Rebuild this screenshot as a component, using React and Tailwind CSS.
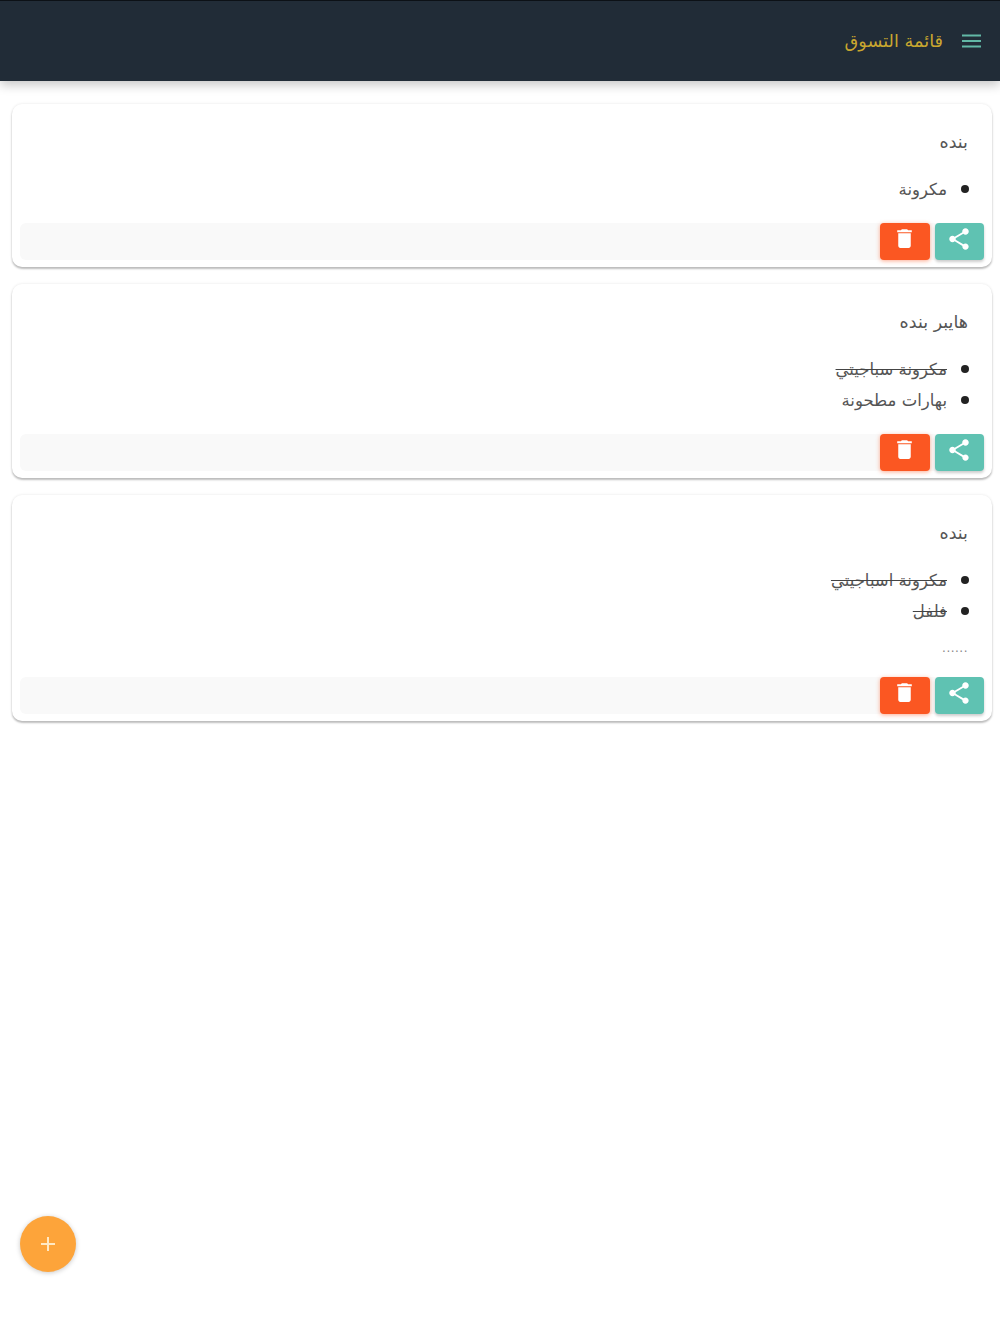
import React from 'react'
import { MdShare, MdDelete } from 'react-icons/md'

const lists = [
  { title: 'بنده', items: [{ text: 'مكرونة' }] },
  { title: 'هايبر بنده', items: [{ text: 'مكرونة سباجيتي', done: true }, { text: 'بهارات مطحونة' }] },
  { title: 'بنده', items: [{ text: 'مكرونة اسباجيتي', done: true }, { text: 'فلفل', done: true }], note: '......' },
]

function ListCard({ list }) {
  return (
    <div className="rounded-[10px] bg-white px-2 pb-[7px] shadow-[0_2px_2px_rgba(0,0,0,0.24),0_0_3px_rgba(0,0,0,0.1)]">
      <p className="pr-4 pt-[25px] text-[17.5px] leading-[26px] text-[#555]">{list.title}</p>
      <ul className="mt-[23px] pr-[37px]">
        {list.items.map((item, i) => (
          <li key={i} className="relative h-[31px] text-[16.5px] leading-[24px] text-[#555]">
            <span className="absolute -right-[22px] top-[7px] h-[8px] w-[8px] rounded-full bg-[#222]" />
            <span className={item.done ? 'line-through decoration-[#444]' : ''}>{item.text}</span>
          </li>
        ))}
      </ul>
      {list.note && <p className="pb-[6px] pr-4 pt-[8px] text-[12px] leading-[18px] tracking-[0.5px] text-[#888]">{list.note}</p>}
      <div className="mt-[14px] flex h-[37px] items-start gap-[5px] rounded-[6px] bg-[#f9f9f9]">
        <button className="flex h-[37px] w-[49px] items-start justify-center rounded-[4px] bg-[#5fc2b2] pr-[1px] pt-[3px] text-white shadow-[0_2px_3px_rgba(0,0,0,0.2)]">
          <MdShare size={26} />
        </button>
        <button className="flex h-[37px] w-[50px] items-start justify-center rounded-[4px] bg-[#fb5722] pr-[1px] pt-[3px] text-white shadow-[0_1px_4px_rgba(251,87,34,0.5)]">
          <MdDelete size={25} />
        </button>
      </div>
    </div>
  )
}

export default function App() {
  return (
    <div dir="rtl" className="relative h-[1334px] overflow-hidden bg-white font-['DejaVu_Sans','Noto_Sans',sans-serif]">
      <header className="flex h-[81px] items-center gap-[19px] border-t border-[#0c1116] bg-[#212c37] pr-[19px] shadow-[0_4px_10px_rgba(0,0,0,0.22)]">
        <svg width="19" height="14" viewBox="0 0 19 14" className="text-[#62b8a6]">
          <path d="M0 1.5h19M0 7h19M0 12.5h19" stroke="currentColor" strokeWidth="2" />
        </svg>
        <h1 className="text-[17.7px] font-normal text-[#c9a72f]">قائمة التسوق</h1>
      </header>

      <main className="flex flex-col gap-[17px] pl-[12px] pr-[8px] pt-[23px]">
        {lists.map((list, i) => (
          <ListCard key={i} list={list} />
        ))}
      </main>

      <button className="absolute bottom-[62px] left-[20px] flex h-[56px] w-[56px] items-center justify-center rounded-full bg-[#fda43a] text-[#ffe9c4] shadow-[0_1px_5px_rgba(0,0,0,0.22)]">
        <svg width="14" height="14" viewBox="0 0 14 14">
          <path d="M7 0v14M0 7h14" stroke="currentColor" strokeWidth="2" />
        </svg>
      </button>
    </div>
  )
}
